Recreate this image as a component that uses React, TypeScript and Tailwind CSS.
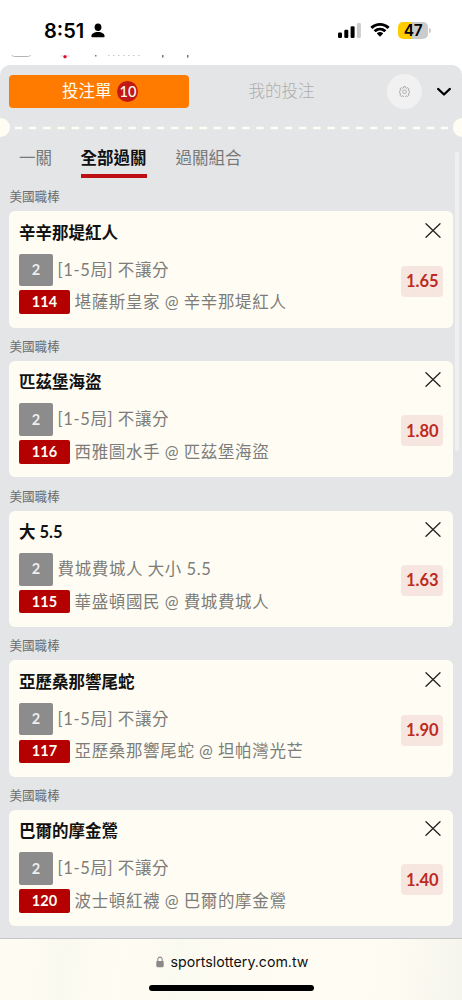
import React from 'react';

type Bet = { title: string; desc: string; no: string; match: string; odds: string };

const bets: Bet[] = [
  { title: '辛辛那堤紅人', desc: '[1-5局] 不讓分', no: '114', match: '堪薩斯皇家 @ 辛辛那堤紅人', odds: '1.65' },
  { title: '匹茲堡海盜', desc: '[1-5局] 不讓分', no: '116', match: '西雅圖水手 @ 匹茲堡海盜', odds: '1.80' },
  { title: '大 5.5', desc: '費城費城人 大小 5.5', no: '115', match: '華盛頓國民 @ 費城費城人', odds: '1.63' },
  { title: '亞歷桑那響尾蛇', desc: '[1-5局] 不讓分', no: '117', match: '亞歷桑那響尾蛇 @ 坦帕灣光芒', odds: '1.90' },
  { title: '巴爾的摩金鶯', desc: '[1-5局] 不讓分', no: '120', match: '波士頓紅襪 @ 巴爾的摩金鶯', odds: '1.40' },
];

function StatusBar() {
  return (
    <header className="flex h-[53px] shrink-0 items-start bg-white pl-[44px] pt-[19px] font-['Inter',sans-serif] text-black">
      <span className="w-[47px] text-[20px] font-semibold leading-[24px]">8:51</span>
      <svg className="mt-[4px]" width="14" height="16" viewBox="0 0 14 16">
        <ellipse cx="7" cy="4.2" rx="3.4" ry="3.8" />
        <path d="M.4 13.3C.4 10.7 3.1 9 7 9s6.6 1.7 6.6 4.3c0 .7-.4 1-1.1 1h-11c-.7 0-1.1-.3-1.1-1Z" />
      </svg>
      <svg className="ml-[233px] mt-[4px]" width="23" height="16" viewBox="0 0 23 16">
        <rect x="0" y="9.5" width="4" height="5.5" rx="1.2" />
        <rect x="6.3" y="6.8" width="4" height="8.2" rx="1.2" />
        <rect x="12.6" y="3.3" width="4" height="11.7" rx="1.2" />
        <rect x="18.9" y="0" width="4" height="15" rx="1.2" fill="#cccccc" />
      </svg>
      <svg className="ml-[9px] mt-[4px]" width="20" height="15" viewBox="0 0 20 15">
        <path d="M10 2.8c2.8 0 5.3 1.1 7.2 2.9.2.2.4.2.6 0l1.5-1.4c.2-.2.2-.5 0-.7C16.8 1.3 13.5 0 10 0S3.2 1.3.7 3.6c-.2.2-.2.5 0 .7l1.5 1.4c.2.2.4.2.6 0C4.7 3.9 7.2 2.8 10 2.8Z" />
        <path d="M10 7.6c1.5 0 2.9.6 4 1.5.2.2.4.2.6 0l1.5-1.5c.2-.2.2-.5 0-.7A9 9 0 0 0 10 4.7a9 9 0 0 0-6.1 2.2c-.2.2-.2.5 0 .7l1.5 1.5c.2.2.4.2.6 0 1.1-.9 2.5-1.5 4-1.5Z" />
        <path d="M12.9 10.8c.2-.2.2-.5 0-.7a4.7 4.7 0 0 0-5.8 0c-.2.2-.2.5 0 .7l2.6 2.6c.2.2.4.2.6 0Z" />
      </svg>
      <div className="ml-[8px] mt-[3px] flex h-[17px] w-[30px] items-center justify-center rounded-[5px] bg-[linear-gradient(90deg,#ffcc00_47%,#cbcbcb_47%)] text-[15.5px] font-semibold leading-[17px] tracking-[-0.5px]">
        47
      </div>
      <div className="ml-px mt-[9px] h-[5px] w-[2px] rounded-r-full bg-[#cccccc]" />
    </header>
  );
}

function PageRemnant() {
  return (
    <svg className="block shrink-0 bg-white" width="462" height="12" viewBox="0 0 462 12">
      <path d="M12 2c.5 1.2 1 1.5 2.5 1.5h13c1.5 0 2.5-.3 3-1.5" fill="none" stroke="#b4b4b4" />
      <path d="M60 3h10" stroke="#f0cdd2" strokeWidth=".8" />
      <rect x="63.5" y="2.2" width="3" height="3" rx="1" fill="#df0826" />
      <g fill="#777777">
        <rect x="95" y="2" width="1.5" height="1.5" />
        <rect x="162" y="2" width="1.5" height="2.6" />
        <rect x="187" y="2" width="1.5" height="2.6" />
      </g>
      <path d="M108 2.5h35" stroke="#c8c8c8" strokeDasharray="1.5 3.5" />
    </svg>
  );
}

function GearIcon() {
  return (
    <svg width="11" height="11" viewBox="0 0 24 24" fill="none" stroke="#a0a0a0" strokeWidth="1.8" strokeLinejoin="round">
      <path d="M10 1.5h4l.7 3 1.8.8 2.7-1.7 2.7 2.8-1.6 2.7.7 1.7 2.7.7v3.5l-2.9.9-.7 1.6 1.5 2.7-2.7 2.7-2.7-1.6-1.7.7-.7 3h-3.8l-.7-3-1.7-.7-2.7 1.6-2.7-2.7 1.6-2.7-.8-1.7-2.9-.8v-3.5l2.9-.7.8-1.7-1.6-2.7 2.7-2.8 2.7 1.7 1.7-.8Z" />
      <circle cx="12" cy="12.5" r="4" />
    </svg>
  );
}

function SlipHeader() {
  return (
    <div className="flex h-[53px] shrink-0 items-center pl-[9.4px]">
      <button className="flex h-[33px] w-[179.5px] items-center justify-center gap-[6px] rounded-[4px] bg-[#ff7b00] pl-[2px] text-[16.5px] leading-[33px] text-[#fffdf3]">
        <span>投注單</span>
        <span className="flex size-[21px] items-center justify-center rounded-full bg-[#c21917] text-[14.5px] font-medium leading-[21px]">10</span>
      </button>
      <button className="w-[185px] text-center text-[16.5px] font-light text-[#acadae]">我的投注</button>
      <button className="ml-[13px] flex size-[35.5px] items-center justify-center rounded-full bg-[#f1f1f1]">
        <GearIcon />
      </button>
      <svg className="ml-[14px] mt-px" width="16" height="10" viewBox="0 0 16 10" fill="none" stroke="black" strokeWidth="2.4" strokeLinecap="round" strokeLinejoin="round">
        <path d="m2.2 2 5.8 5.5L13.800 2" />
      </svg>
    </div>
  );
}

function Perforation() {
  return (
    <div className="flex h-[18px] shrink-0 items-center justify-between">
      <div className="h-[19px] w-[9.5px] rounded-r-full bg-[#fffdf3]" />
      <svg className="mt-[2px]" width="443" height="4" viewBox="0 0 443 4">
        <path d="M4.8 2H438" stroke="#fffdf3" strokeWidth="2.4" strokeDasharray="7.4 6.81" />
      </svg>
      <div className="h-[19px] w-[9.5px] rounded-l-full bg-[#fffdf3]" />
    </div>
  );
}

function ModeTabs() {
  return (
    <nav className="flex h-[51.2px] shrink-0 pl-[19px] pt-[10px] text-[16.5px] leading-[24px] text-[#777879]">
      <span className="w-[61.5px]">一關</span>
      <span className="h-[32px] w-[66.5px] border-b-4 border-[#bf0f14] font-bold text-[#101010]">全部過關</span>
      <span className="ml-[28.5px]">過關組合</span>
    </nav>
  );
}

function BetCard({ bet }: { bet: Bet }) {
  return (
    <section className="h-[149.7px] shrink-0 pl-[9.4px]">
      <h3 className="h-[24px] text-[12.6px] leading-[20px] text-[#6c6d6e]">美國職棒</h3>
      <article className="flex h-[116.5px] w-[443.2px] justify-between rounded-[6px] bg-[#fffdf3] pl-[9.6px] pr-[9.2px]">
        <div className="whitespace-nowrap pt-[9.5px]">
          <h4 className="h-[33px] text-[16.5px] font-bold leading-[24px] text-[#111111]">{bet.title}</h4>
          <div className="flex h-[36.5px] items-start gap-[4.5px]">
            <span className="flex h-[32.5px] w-[34px] items-center justify-center rounded-[2px] bg-[#8c8c8c] text-[14.5px] font-bold text-[#eeeeec]">2</span>
            <span className="text-[16.5px] leading-[32px] tracking-[0.65px] text-[#7c7c7a] [word-spacing:-0.4px]">{bet.desc}</span>
          </div>
          <div className="flex h-[24px] items-center gap-[4.5px]">
            <span className="flex h-[23.5px] w-[51px] items-center justify-center rounded-[2px] bg-[#b40000] text-[14.5px] font-bold text-[#fffdf3]">{bet.no}</span>
            <span className="text-[16.5px] leading-[24px] tracking-[0.65px] text-[#7c7c7a] [word-spacing:-0.4px]">{bet.match}</span>
          </div>
        </div>
        <div className="flex flex-col items-end pt-[11.5px]">
          <svg className="mr-[2px]" width="16" height="15" viewBox="0 0 16 15" fill="none" stroke="#222222" strokeWidth="1.3" strokeLinecap="round">
            <path d="m1 .7 14 13.6M15 .7 1 14.3" />
          </svg>
          <span className="mt-[28px] flex h-[31px] w-[42.3px] items-center justify-center rounded-[4px] bg-[#f7e6e0] text-[16.5px] font-bold text-[#bd2a22]">{bet.odds}</span>
        </div>
      </article>
    </section>
  );
}

function BrowserBar() {
  return (
    <footer className="flex h-[62px] shrink-0 flex-col items-center border-t border-[#c6c6c8] bg-[linear-gradient(95deg,#fffdf3_0%,#faf9f0_14%,#fffdf3_26%,#fbfaf1_38%,#fffdf3_60%,#fffdf3_80%,#f6f5ed_100%)] pt-[12px]">
      <div className="flex h-[21px] items-center gap-[7px] pl-[2px] font-['Inter',sans-serif] text-[14.2px] leading-[21px] text-[#111111]">
        <svg width="8" height="12" viewBox="0 0 9 13">
          <path d="M2 6V3.5a2.5 2.5 0 0 1 5 0V6" fill="none" stroke="#8b8a88" strokeWidth="1.2" />
          <rect x=".3" y="5.3" width="8.4" height="7" rx="1.3" fill="#8b8a88" />
        </svg>
        <span>sportslottery.com.tw</span>
      </div>
      <div className="mt-[12.5px] h-[6px] w-[165px] rounded-full bg-black" />
    </footer>
  );
}

export default function App() {
  return (
    <div className="flex h-[1000px] w-[462px] flex-col overflow-hidden bg-white font-['Lato','Noto_Sans_CJK_TC',sans-serif]">
      <StatusBar />
      <PageRemnant />
      <main className="relative flex min-h-0 flex-1 flex-col overflow-hidden rounded-t-[10px] bg-[#e4e5e7]">
        <SlipHeader />
        <Perforation />
        <ModeTabs />
        {bets.map((bet) => (
          <BetCard key={bet.no} bet={bet} />
        ))}
        <div className="absolute right-[3.5px] top-[87px] h-[299px] w-[3.5px] rounded-full bg-[#f0f0f1]" />
      </main>
      <BrowserBar />
    </div>
  );
}
